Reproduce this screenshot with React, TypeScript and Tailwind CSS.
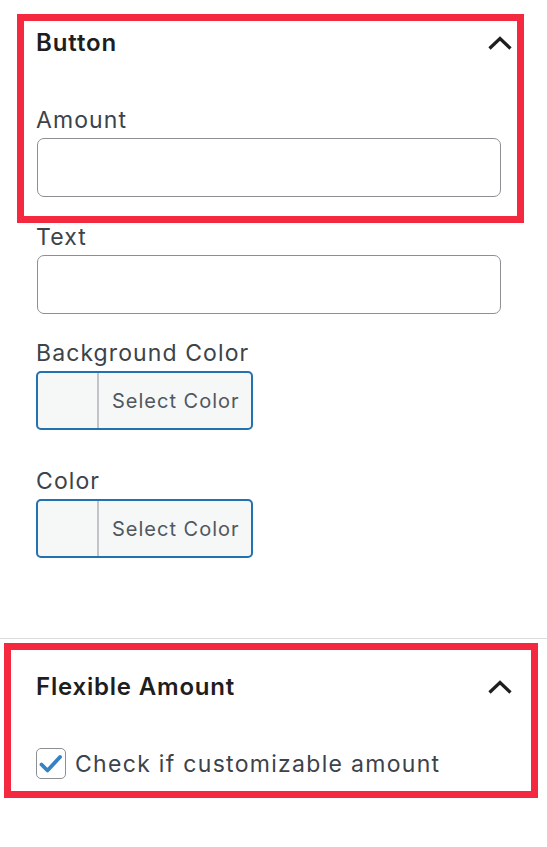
const font = { fontFamily: 'Inter, "Noto Sans", sans-serif' };

function Caret() {
    return (
        <svg width="26" height="15" viewBox="0 0 26 15" fill="none" className="shrink-0 -mr-[2px]">
            <path d="M2.5 12.5 L13 2.5 L23.5 12.5" stroke="#1e1e1e" strokeWidth="3.2" strokeLinecap="butt" />
        </svg>
    );
}

function TextField({ label, first }: { label: string; first?: boolean }) {
    return (
        <div className={first ? 'mt-[40px]' : 'mt-[26px]'}>
            <div className="text-[23px] leading-[28px] text-[#3c434a] tracking-[1.1px] mb-[4px]">{label}</div>
            <input
                type="text"
                className="block w-[464px] h-[59px] ml-px rounded-[7px] border-[1.5px] border-[#8c8f94] bg-white outline-none"
            />
        </div>
    );
}

function ColorField({ label, top }: { label: string; top: string }) {
    return (
        <div className={top}>
            <div className="text-[23px] leading-[28px] text-[#3c434a] tracking-[1.1px] mb-[4px]">{label}</div>
            <button className="flex w-[217px] h-[59px] rounded-[5px] border-2 border-[#2271b1] bg-[#f6f7f7] overflow-hidden">
                <span className="w-[61px] h-full border-r-2 border-[#c3c4c7]" />
                <span className="flex-1 flex items-center pl-[13px] text-[20px] text-[#50575e] tracking-[1px]">
                    Select Color
                </span>
            </button>
        </div>
    );
}

export default function App() {
    return (
        <div className="relative w-[547px] h-[847px] bg-white overflow-hidden" style={font}>
            {/* Button panel */}
            <div className="px-[36px] pt-[20px] h-[638px]">
                <div className="flex items-center justify-between h-[46px]">
                    <h2 className="text-[24px] font-semibold text-[#1e1e1e] tracking-[0.9px]">Button</h2>
                    <Caret />
                </div>
                <TextField label="Amount" first />
                <TextField label="Text" />
                <ColorField label="Background Color" top="mt-[25px]" />
                <ColorField label="Color" top="mt-[37px]" />
            </div>

            {/* Flexible Amount panel */}
            <div className="border-t border-[#dcdcde] px-[36px]">
                <div className="flex items-center justify-between h-[48px] mt-[24px]">
                    <h2 className="text-[24px] font-semibold text-[#1e1e1e] tracking-[0.8px]">Flexible Amount</h2>
                    <Caret />
                </div>
                <label className="flex items-center gap-[9px] mt-[37px]">
                    <span className="flex items-center justify-center w-[30px] h-[31px] rounded-[5px] border-[1.5px] border-[#8c8f94] bg-white">
                        <svg width="24" height="20" viewBox="0 0 24 20" fill="none">
                            <path d="M2.5 10.5 L8.5 16.5 L21 3" stroke="#3582c4" strokeWidth="3.8" strokeLinecap="round" strokeLinejoin="round" />
                        </svg>
                    </span>
                    <span className="text-[23px] leading-[30px] text-[#3c434a] tracking-[1.3px]">Check if customizable amount</span>
                </label>
            </div>

            {/* highlight frames */}
            <div className="absolute left-[17px] top-[14px] w-[507px] h-[209px] border-[7px] border-[#f4283f] pointer-events-none" />
            <div className="absolute left-[4px] top-[643px] w-[534px] h-[155px] border-[7px] border-[#f4283f] pointer-events-none" />
        </div>
    );
}
